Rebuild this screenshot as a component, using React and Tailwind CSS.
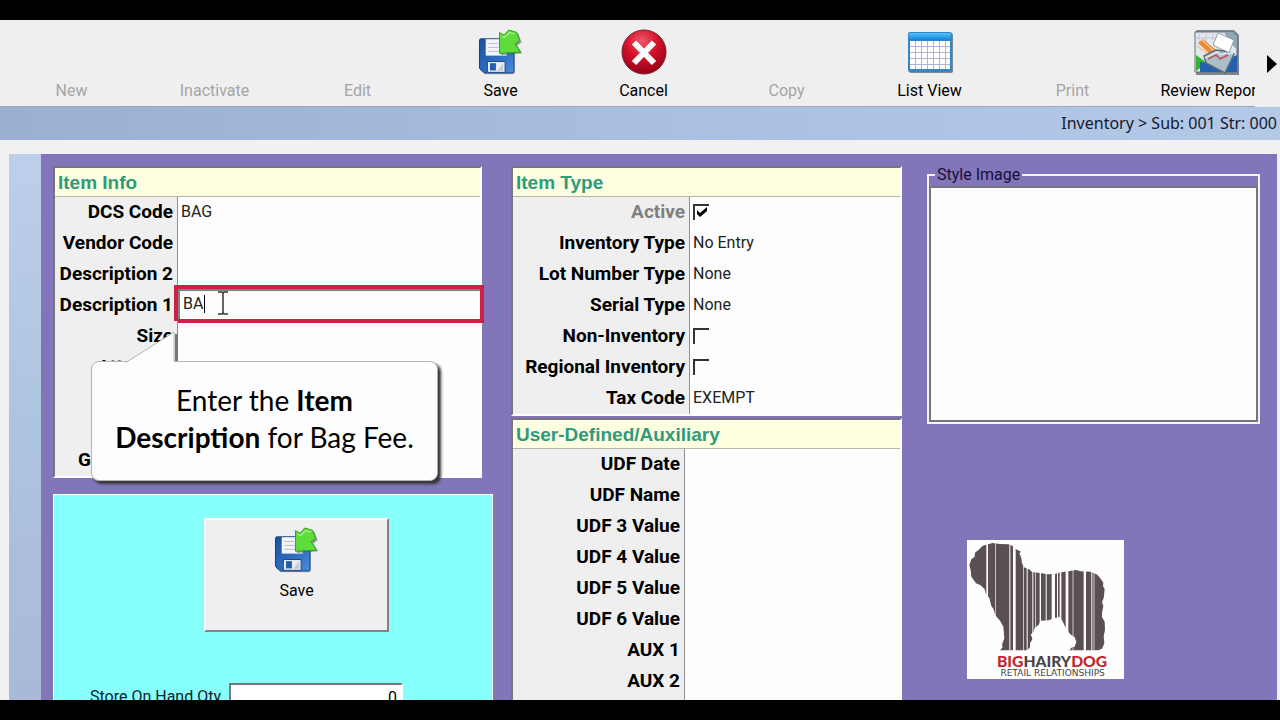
import { useState } from 'react'

const toolbarItems = [
  { label: 'New' },
  { label: 'Inactivate' },
  { label: 'Edit' },
  { label: 'Save', icon: 'save' },
  { label: 'Cancel', icon: 'cancel' },
  { label: 'Copy' },
  { label: 'List View', icon: 'list' },
  { label: 'Print' },
  { label: 'Review Reports', icon: 'reports' },
]

const auxFields = [
  'UDF Date',
  'UDF Name',
  'UDF 3 Value',
  'UDF 4 Value',
  'UDF 5 Value',
  'UDF 6 Value',
  'AUX 1',
  'AUX 2',
  '',
]

const SaveIcon = () => (
  <svg viewBox="152 84 136 140" className="h-[46px] w-[45px]" aria-hidden="true">
    <defs>
      <linearGradient id="disk" x1="0" y1="0" x2="1" y2="1">
        <stop offset="0" stopColor="#1c4fa0" />
        <stop offset="0.6" stopColor="#2f6fc4" />
        <stop offset="1" stopColor="#4a8ede" />
      </linearGradient>
    </defs>
    <path d="M160 118h98q6 0 6 6v92q0 6-6 6h-86l-14-12v-86q0-6 2-6z" fill="#8a8f98" opacity="0.6" />
    <path d="M160 114h96q5 0 5 5v94q0 5-5 5h-84l-16-14v-85q0-5 4-5z" fill="url(#disk)" stroke="#173f7c" strokeWidth="3" />
    <path d="M175 115h64v50h-64z" fill="#f4f5fb" />
    <path d="M183 128h30M183 140h32M183 152h36" stroke="#b9bdd0" strokeWidth="3" />
    <path d="M180 183h54v33h-54z" fill="#e8ecf4" stroke="#1e4680" strokeWidth="3" />
    <path d="M188 188h18v22h-18z" fill="#1f5fae" />
    <path d="M228 189l-18 22h18z" fill="#c3cbd8" />
    <path d="M221 99L236 104L250 92L274 98L284 124L271 134L286 158L221 163z" fill="#44604a" opacity="0.6" />
    <path
      d="M217 95L231 103L245 87L269 94L278 119L264 129L281 154L217 158z"
      fill="#5fdc3c"
      stroke="#2fa528"
      strokeWidth="3"
      strokeLinejoin="round"
    />
    <path d="M224 106l8 4 16-15 15 4" fill="none" stroke="#a5f28b" strokeWidth="4" />
  </svg>
)

const CancelIcon = () => (
  <svg viewBox="0 0 46 46" className="h-[46px] w-[46px]" aria-hidden="true">
    <defs>
      <radialGradient id="ball" cx="0.45" cy="0.25" r="0.8">
        <stop offset="0" stopColor="#f0586a" />
        <stop offset="0.45" stopColor="#d3122b" />
        <stop offset="1" stopColor="#8d0016" />
      </radialGradient>
    </defs>
    <circle cx="23" cy="23" r="22" fill="url(#ball)" stroke="#7d1a26" strokeWidth="1" />
    <path d="M13 13.500L33 34M33 13.500L13 34" stroke="#fff" strokeWidth="6" />
  </svg>
)

const ListIcon = () => (
  <svg viewBox="0 0 46 46" className="h-[46px] w-[46px]" aria-hidden="true">
    <defs>
      <linearGradient id="listTop" x1="0" y1="0" x2="0" y2="1">
        <stop offset="0" stopColor="#58c0f8" />
        <stop offset="1" stopColor="#0f84dc" />
      </linearGradient>
    </defs>
    <rect x="2" y="4" width="44" height="40" rx="2" fill="#7a8894" />
    <rect x="1" y="3" width="44" height="40" rx="2" fill="#2f86c8" />
    <path d="M2 4h42v7H2z" fill="url(#listTop)" />
    <path d="M3 12h40v28H3z" fill="#b3b0d4" />
    {[12, 18, 24, 30, 36].map((y) =>
      [3, 9, 15, 21, 27, 33, 39].map((x) => (
        <rect key={`${x}-${y}`} x={x} y={y} width={x === 39 ? 4 : 5} height={y === 36 ? 4 : 5} fill="#fff" />
      ))
    )}
  </svg>
)

const ReportsIcon = () => (
  <svg viewBox="0 0 46 46" className="h-[46px] w-[46px]" aria-hidden="true">
    <path d="M2 3l2-2h37l5 5v40H3z" fill="#7d868f" />
    <path d="M2 3h38l4 4v36H2z" fill="#e3e8ee" stroke="#66717b" />
    <path d="M6 3v10M13 3v12M3 9h20M20 3v8" stroke="#c0c6dd" />
    <path d="M31 3l9 0 4 5v13l-8-9z" fill="#8fa9b4" />
    <path d="M3 26l11 8-11 8z" fill="#34b233" />
    <path d="M7 33l14 2 23-9v17H7z" fill="#2460ae" />
    <path d="M5 14l5-4 13 11-5 5z" fill="#f08a35" />
    <path d="M4 17l14 10M9 11l12 11" stroke="#f7c08c" strokeWidth="1.500" />
    <path d="M25 4l16 7-5 13-16-8z" fill="#fff" stroke="#8fa0ac" />
    <path d="M11 27l12-6 8 1 4 2 6 1-9 19-19-10z" fill="#a9bfc9" stroke="#58707d" strokeWidth="1.500" />
    <path d="M12 29l12-6 4 3 5-2 7 1" fill="none" stroke="#dbe7ec" strokeWidth="1.500" />
    <path d="M15 30l8-4 4 4 8-4" fill="none" stroke="#c6505a" strokeWidth="1.500" />
  </svg>
)

const icons = {
  save: SaveIcon,
  cancel: CancelIcon,
  list: ListIcon,
  reports: ReportsIcon,
}

const Toolbar = () => (
  <div className="flex shrink-0 bg-[#efefef]">
    <nav className="flex min-w-0 flex-1 overflow-hidden border-b border-[#a9a2b4]">
      {toolbarItems.map(({ label, icon }) => {
        const Icon = icons[icon]
        return (
          <button
            key={label}
            disabled={!icon}
            className="flex h-[86px] w-[143px] shrink-0 flex-col items-center justify-end gap-1.5 pb-[5px] text-base leading-5 text-black disabled:text-[#a5a5a5]"
          >
            {Icon && <Icon />}
            {label}
          </button>
        )
      })}
    </nav>
    <button aria-label="More" className="flex w-[25px] items-center justify-end pr-[3px]">
      <svg viewBox="0 0 10 18" className="h-[18px] w-2.5">
        <path d="M0 0l10 9-10 9z" />
      </svg>
    </button>
  </div>
)

const Panel = ({ title, className = '', children }) => (
  <section className={`relative border-2 border-t-[#77757c] border-r-white border-b-white border-l-[#77757c] bg-[#fdfdfd] ${className}`}>
    <h2 className="bg-[#fefee0] pt-0.5 pl-[3px] font-['Liberation_Sans',sans-serif] text-[19px] leading-[26px] font-bold text-[#2f9a7c]">{title}</h2>
    <div className="border-t border-[#b5b5a8]">{children}</div>
  </section>
)

const Row = ({ id, label, labelWidth, muted, children }) => (
  <div className="relative flex h-[31px] items-stretch">
    <label
      htmlFor={id}
      className={`${labelWidth} shrink-0 bg-[#efefef] pr-1 text-right text-[19px] leading-[30px] font-bold whitespace-nowrap ${muted ? 'text-[#808080]' : 'text-black'}`}
    >
      {label}
    </label>
    <div className="flex min-w-0 flex-1 items-center border-l border-[#8f8f8f] pb-px pl-[3px]">{children}</div>
  </div>
)

const TextField = ({ id, value = '' }) => (
  <input id={id} type="text" readOnly value={value} className="w-full min-w-0 bg-transparent text-base text-[#222] outline-none" />
)

const CheckField = ({ id, defaultChecked }) => {
  const [checked, setChecked] = useState(!!defaultChecked)
  return (
    <span className="relative block h-4 w-4">
      <input
        id={id}
        type="checkbox"
        checked={checked}
        onChange={(e) => setChecked(e.target.checked)}
        className="block h-4 w-4 appearance-none border-t-2 border-l-2 border-[#333]"
      />
      {checked && (
        <svg viewBox="0 0 16 16" className="pointer-events-none absolute inset-0 h-4 w-4">
          <path d="M4 6l3 3 7-6v4l-7 6-3-3z" fill="#000" />
        </svg>
      )}
    </span>
  )
}

const Callout = () => (
  <div className="absolute top-[193px] left-9 w-[347px] rounded-lg border border-[#b5b5b5] bg-[#fdfdfd] px-4 pt-5 pb-6 text-center font-[Lato,sans-serif] text-[28px] leading-[37px] text-black shadow-[3px_3px_3px_#333]">
    <svg viewBox="0 0 56 32" className="absolute -top-[31px] left-[34px] h-8 w-14" aria-hidden="true">
      <path d="M49 3h3v27h-3z" fill="#777" />
      <path d="M0 32L1 31L48 1V32z" fill="#fdfdfd" />
      <path d="M0 31.500L48 1V31" fill="none" stroke="#b5b5b5" />
    </svg>
    Enter the <b>Item Description</b> for Bag Fee.
  </div>
)

const ItemInfo = () => {
  const [description, setDescription] = useState('BA')
  const w = 'w-[122px]'
  return (
    <Panel title="Item Info" className="mr-[11px]">
      <Row id="dcs" label="DCS Code" labelWidth={w}><TextField id="dcs" value="BAG" /></Row>
      <Row id="vendor" label="Vendor Code" labelWidth={w}><TextField id="vendor" /></Row>
      <Row id="desc2" label="Description 2" labelWidth={w}><TextField id="desc2" /></Row>
      <Row id="desc1" label="Description 1" labelWidth={w}>
        <div className="absolute -top-[5px] -right-1 left-[119px] flex h-[38px] items-center border-4 border-[#cf1f48] bg-[#fdfdfd]">
          <input
            id="desc1"
            type="text"
            value={description}
            onChange={(e) => setDescription(e.target.value)}
            className="h-full w-full min-w-0 border-t-2 border-l-2 border-[#808080] pb-1 pl-[3px] text-base text-[#222] outline-none"
          />
          <span className="absolute top-1.5 left-[26px] h-[18px] w-px bg-black" />
          <svg viewBox="0 0 12 24" className="absolute top-0.5 left-[39px] h-6 w-3" aria-hidden="true">
            <path d="M1 1h4l1 1 1-1h4M1 23h4l1-1 1 1h4M6 2v20" fill="none" stroke="#333" strokeWidth="1.500" />
          </svg>
        </div>
      </Row>
      <Row id="size" label="Size" labelWidth={w}><TextField id="size" /></Row>
      <Row id="attribute" label="Attribute" labelWidth={w} />
      <Row labelWidth={w} />
      <Row labelWidth={w} />
      <Row label={<span className="block pl-[23px] text-left">G</span>} labelWidth={w} />
      <Callout />
    </Panel>
  )
}

const ItemType = () => {
  const w = 'w-44'
  return (
    <Panel title="Item Type">
      <Row id="active" label="Active" labelWidth={w} muted><CheckField id="active" defaultChecked /></Row>
      <Row id="invtype" label="Inventory Type" labelWidth={w}><TextField id="invtype" value="No Entry" /></Row>
      <Row id="lot" label="Lot Number Type" labelWidth={w}><TextField id="lot" value="None" /></Row>
      <Row id="serial" label="Serial Type" labelWidth={w}><TextField id="serial" value="None" /></Row>
      <Row id="noninv" label="Non-Inventory" labelWidth={w}><CheckField id="noninv" /></Row>
      <Row id="regional" label="Regional Inventory" labelWidth={w}><CheckField id="regional" /></Row>
      <Row id="tax" label="Tax Code" labelWidth={w}><TextField id="tax" value="EXEMPT" /></Row>
    </Panel>
  )
}

const Auxiliary = () => (
  <Panel title="User-Defined/Auxiliary">
    {auxFields.map((label, i) => (
      <Row key={i} id={`aux${i}`} label={label} labelWidth="w-[171px]">
        <TextField id={`aux${i}`} />
      </Row>
    ))}
  </Panel>
)

const SavePanel = () => (
  <div className="flex flex-1 flex-col border border-white bg-[#87fffb] pt-[23px]">
    <button className="ml-[150px] flex h-[114px] w-[185px] shrink-0 flex-col items-center gap-2 border-2 border-t-white border-r-[#83818a] border-b-[#83818a] border-l-white bg-[#efeef1] pt-[7px] text-base leading-5">
      <SaveIcon />
      Save
    </button>
    <div className="mt-[51px] flex items-center gap-2 pl-9">
      <label htmlFor="onhand" className="text-base text-[#123]">Store On Hand Qty</label>
      <input
        id="onhand"
        type="text"
        readOnly
        value="0"
        className="h-7 w-[174px] border-2 border-t-[#777] border-r-white border-b-white border-l-[#777] bg-white pr-1 text-right text-base"
      />
    </div>
  </div>
)

const gaps = [
  [139, 5], [166, 2], [208, 3], [219, 8], [249, 2], [260, 3], [277, 3], [285, 2],
  [299, 4], [317, 3], [335, 10], [351, 3], [359, 5], [377, 8], [398, 2], [431, 7],
  [454, 3], [461, 2],
]

const outline = [
  [88, 105], [94, 88], [104, 80], [105, 68], [118, 58], [128, 47], [144, 43], [158, 39],
  [180, 42], [206, 43], [220, 49], [228, 58], [243, 65], [238, 70], [244, 84], [246, 100],
  [252, 112], [270, 119], [276, 126], [300, 129], [322, 133], [345, 132], [362, 127],
  [385, 124], [408, 120], [422, 124], [452, 125], [472, 134], [482, 146], [490, 158],
  [489, 168], [494, 178], [491, 205], [486, 216], [490, 228], [486, 248], [486, 262],
  [494, 275], [495, 300], [491, 318], [493, 340], [486, 356], [474, 361], [388, 361],
  [396, 352], [404, 350], [409, 335], [404, 322], [390, 312], [376, 292], [370, 278],
  [360, 260], [345, 264], [325, 271], [302, 272], [296, 284], [284, 294], [280, 306],
  [272, 314], [278, 326], [270, 340], [270, 352], [262, 361], [180, 361], [188, 352],
  [186, 344], [193, 325], [190, 290], [180, 272], [166, 256], [160, 236], [154, 228],
  [148, 204], [138, 192], [134, 178], [122, 166], [108, 160], [94, 140], [92, 120],
]

const DogLogo = () => (
  <div className="absolute right-[156px] bottom-[21px] bg-[#fefefe]">
    <svg viewBox="81 30 471 417" className="block h-[139px] w-[157px]" role="img" aria-label="Big Hairy Dog">
      <polygon points={outline.map((p) => p.join(',')).join(' ')} fill="#5a4f51" />
      {gaps.map(([x, width]) => (
        <rect key={x} x={x} y="34" width={width} height="330" fill="#fefefe" />
      ))}
      <text x="336" y="410" textAnchor="middle" fontFamily="Lato, sans-serif" fontWeight="900" fontSize="47" fill="#c1272d">
        BIG<tspan fill="#4a4244">HAIRY</tspan>DOG
      </text>
      <text x="338" y="438" textAnchor="middle" fontFamily="'DejaVu Sans', sans-serif" fontSize="27" fill="#4a4244">
        RETAIL RELATIONSHIPS
      </text>
    </svg>
  </div>
)

const App = () => {
  return (
    <div className="flex h-screen flex-col overflow-hidden bg-black py-5 font-[Roboto,sans-serif]">
      <div className="relative flex min-h-0 flex-1 flex-col overflow-hidden bg-[#f1f1f3]">
        <Toolbar />
        <div className="shrink-0 bg-linear-to-r from-[#9aafd2] via-[#a8bfdf] to-[#b4c9e8] pr-[3px] text-right font-['Noto_Sans',sans-serif] text-base leading-[33px] text-[#15182c]">
          Inventory &gt; Sub: 001 Str: 000
        </div>
        <main className="mt-3.5 mr-[3px] ml-[9px] flex min-h-0 flex-1 overflow-hidden bg-[#8275b9]">
          <div className="w-8 shrink-0 bg-linear-to-b from-[#bdcfea] via-[#adc4e0] to-[#a9b9d8]" />
          <div className="grid min-w-0 flex-1 grid-cols-[440fr_391fr_340fr] gap-x-[18px] pt-3 pr-[17px] pl-3">
            <div className="flex min-w-0 flex-col gap-4">
              <ItemInfo />
              <SavePanel />
            </div>
            <div className="flex min-w-0 flex-col gap-0.5">
              <ItemType />
              <Auxiliary />
            </div>
            <fieldset className="ml-[7px] min-w-0 self-start border-2 border-[#f4f2fa]">
              <legend className="ml-1.5 px-0.5 text-base leading-[18px] text-[#15103a]">Style Image</legend>
              <div className="mt-0.5 h-[236px] border-2 border-[#77757c] bg-[#fdfdfd]" />
            </fieldset>
          </div>
        </main>
        <DogLogo />
      </div>
    </div>
  )
}

export default App
